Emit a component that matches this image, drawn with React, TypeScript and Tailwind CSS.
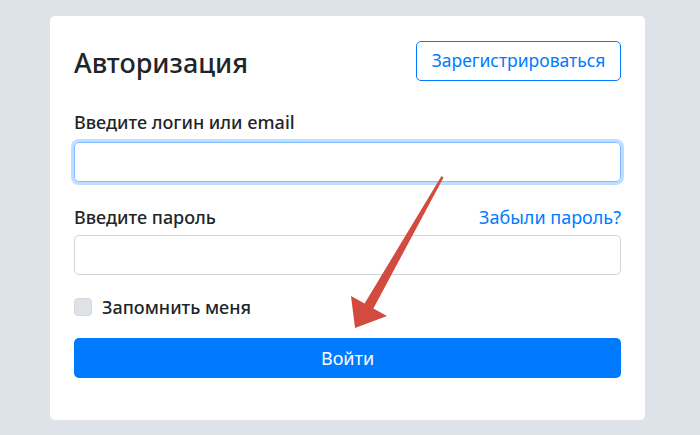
import React from "react";

export default function App() {
  return (
    <div
      className="relative w-[700px] h-[435px] overflow-hidden bg-[#dde3e9] pt-4 pl-[50px]"
      style={{ fontFamily: '"Noto Sans", "Open Sans", sans-serif' }}
    >
      <div className="w-[595px] h-[404px] bg-white rounded-[5px] px-6 pt-[25px]">
        <div className="flex justify-between items-start">
          <h1 className="text-[27px] font-medium text-[#212529] leading-[40px] pt-[2px]">Авторизация</h1>
          <button className="h-10 w-[205px] border border-[#007bff] rounded-[5px] text-[#007bff] text-[17.5px] leading-none">
            Зарегистрироваться
          </button>
        </div>
        <label className="block mt-[27px] text-[18px] font-medium leading-6 text-[#212529]">
          Введите логин или email
        </label>
        <div className="mt-2 h-10 border border-[#80bdff] rounded-[5px] shadow-[0_0_0_3px_rgba(0,123,255,0.25)]" />
        <div className="mt-[23px] flex justify-between items-end h-6">
          <span className="text-[18px] font-medium leading-6 text-[#212529]">Введите пароль</span>
          <span className="text-[18px] leading-6 text-[#007bff]">Забыли пароль?</span>
        </div>
        <div className="mt-[6px] h-10 border border-[#ced4da] rounded-[5px]" />
        <div className="mt-[22px] flex items-center gap-[10px] h-5">
          <span className="w-[18px] h-[18px] rounded-[4px] bg-[#dee2e6] border border-[#d3d8dd]" />
          <span className="text-[18px] font-medium leading-5 text-[#212529]">Запомнить меня</span>
        </div>
        <button className="mt-[21px] h-10 w-full bg-[#007bff] rounded-[5px] text-white text-[18px] leading-none">
          Войти
        </button>
      </div>
      <svg
        className="absolute left-0 top-0 pointer-events-none"
        width="700"
        height="435"
        viewBox="0 0 700 435"
      >
        <polygon
          points="441.5,176 443.5,177.5 373.4,308.5 387,316 355,328 351,296 364.6,303.5"
          fill="#d24b3e"
        />
      </svg>
    </div>
  );
}
